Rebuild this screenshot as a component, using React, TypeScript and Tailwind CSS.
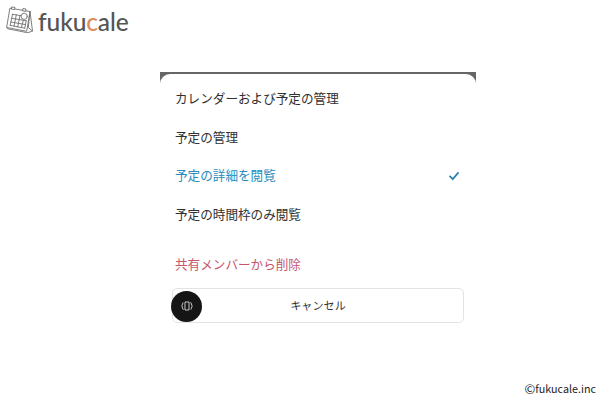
import { clsx } from 'clsx';

const options = [
  { label: 'カレンダーおよび予定の管理', selected: false },
  { label: '予定の管理', selected: false },
  { label: '予定の詳細を閲覧', selected: true },
  { label: '予定の時間枠のみ閲覧', selected: false },
];

function CalendarIcon() {
  return (
    <svg
      width="30"
      height="30"
      viewBox="0 0 30 30"
      fill="none"
      stroke="#707070"
      strokeWidth="0.9"
      strokeLinejoin="round"
      strokeLinecap="round"
    >
      {/* stand */}
      <path d="M24 6.5 L26.5 26 L23 27.3 M24 6.5 L22.3 22.5 L26.3 26" />
      {/* page */}
      <path d="M4.3 3.2 L24 6.5 L20.7 26.3 L1 22.5 Z" />
      <path d="M1 22.5 L1.8 23.8 L21.3 27.7 L23 27.3" />
      {/* rings */}
      <path d="M6 2 L9 2.4 L8.6 4.6 L5.8 4.2 Z M17.3 3.6 L20 4 L19.6 6.4 L17 6 Z" fill="#fff" />
      {/* grid */}
      <path d="M6.5 9.3 L15 10.6 M5.6 13.3 L20.2 15.7 M4.9 17 L19.5 19.6 M4.2 20.4 L18.8 23.2 M6.5 9.3 L4.2 20.4 M10.3 9.9 L8 21.2 M14 10.5 L11.7 22 M17.3 15.3 L15.4 22.6 M20.2 15.7 L18.8 23.2" />
      <circle cx="18.2" cy="11.3" r="3.1" fill="#fff" />
    </svg>
  );
}

function CheckIcon() {
  return (
    <svg width="12" height="10" viewBox="0 0 12 10" fill="none" stroke="#2e83b0" strokeWidth="1.8">
      <path d="M1.5 4.8 L4.8 8.1 L10.5 1.4" />
    </svg>
  );
}

function RotateIcon() {
  return (
    <svg width="12" height="12" viewBox="0 0 12 12" fill="none" stroke="#dcdcdc" strokeWidth="0.9">
      <path d="M4 2 H8 V10 H4 Z" />
      <path d="M2.1 2.5 Q-0.3 6 1.9 9 L2.6 9.8" />
      <path d="M9.9 9.5 Q12.3 6 10.1 3 L9.4 2.2" />
    </svg>
  );
}

export default function App() {
  return (
    <div className="flex h-[400px] w-[600px] flex-col overflow-hidden bg-white font-['Noto_Sans_CJK_JP',sans-serif] text-[#303030]">
      {/* Header */}
      <header className="flex h-[72px] items-start pt-[5px] pl-[6px]">
        <CalendarIcon />
        <span className="ml-[2px] font-['Lato',sans-serif] text-[24.5px] leading-[33px] font-medium tracking-[-0.1px] text-[#555555]">
          fuku<span className="text-[#df8b58]">c</span>ale
        </span>
      </header>

      {/* Permission sheet */}
      <main className="ml-[160px] w-[316px]">
        <div className="bg-linear-to-b from-[#666666] from-[7px] to-white to-[13px] pt-[2px]">
          <div className="rounded-t-[10px] bg-white pt-[5px]">
            {options.map((option) => (
              <div
                key={option.label}
                className={clsx(
                  'flex h-[38.7px] items-center justify-between pr-[16px] pl-[15px] text-[12.6px]',
                  option.selected && 'text-[#278bbb]',
                )}
              >
                {option.label}
                {option.selected && <CheckIcon />}
              </div>
            ))}
            <div className="mt-[12.2px] flex h-[38px] items-center pl-[15px] text-[12.6px] text-[#c5566e]">
              共有メンバーから削除
            </div>
          </div>
        </div>
        <button className="relative mt-[4px] ml-[12px] flex h-[35px] w-[292px] items-center justify-center rounded-[5px] border border-[#e3e3e3] text-[11.1px]">
          <span className="absolute top-[2px] -left-[2px] flex size-[31px] items-center justify-center rounded-full bg-[#151515]">
            <RotateIcon />
          </span>
          キャンセル
        </button>
      </main>

      {/* Footer */}
      <footer className="mt-auto flex items-center justify-end pr-[4px] pb-[3px] text-[10.75px] leading-[17px] text-[#222222]">
        <span className="text-[13px]">©</span>fukucale.inc
      </footer>
    </div>
  );
}
